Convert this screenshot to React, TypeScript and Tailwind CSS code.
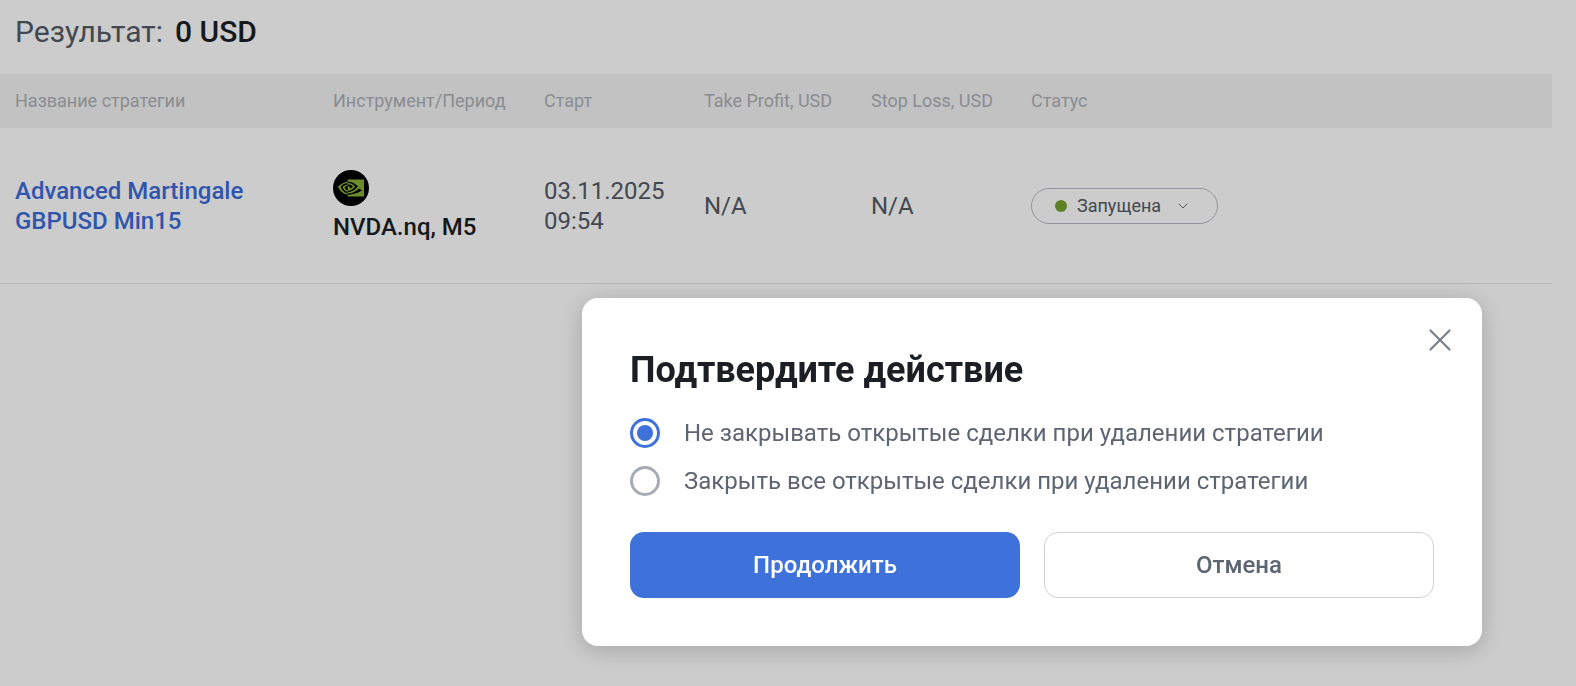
import { SiNvidia } from "react-icons/si";
import { X, ChevronDown } from "lucide-react";

const columns = [
  "Название стратегии",
  "Инструмент/Период",
  "Старт",
  "Take Profit, USD",
  "Stop Loss, USD",
  "Статус",
];

const gridCols = "grid grid-cols-[318px_211px_160px_167px_160px_1fr] pl-[15px]";

export default function App() {
  return (
    <div className="min-h-[686px] w-full bg-white font-['Roboto',sans-serif] overflow-hidden">
      <div className="w-[1552px]">
        {/* result */}
        <div className="flex items-center h-[74px] pl-[15px] pb-[10px] text-[30px] leading-[32px]">
          <span className="text-[#555b66]">Результат:</span>
          <span className="ml-[12px] font-medium text-[#1b1e23]">0 USD</span>
        </div>

        {/* table head */}
        <div className={`${gridCols} items-center h-[54px] pb-[1px] bg-[#f3f3f3] text-[18px] text-[#adb0b6]`}>
          {columns.map((c) => (
            <div key={c}>{c}</div>
          ))}
        </div>

        {/* row */}
        <div className={`${gridCols} items-center h-[156px] border-b border-[#e5e7eb]`}>
          <div className="text-[24px] leading-[30px] font-medium text-[#3b6cd8]">
            Advanced Martingale
            <br />
            GBPUSD Min15
          </div>
          <div className="flex flex-col">
            <div className="flex items-center justify-center w-[36px] h-[36px] rounded-full bg-black">
              <SiNvidia className="w-[26px] h-[26px] text-[#86b032]" />
            </div>
            <div className="mt-[7px] text-[24px] leading-[28px] font-medium text-[#1b1e23]">NVDA.nq, M5</div>
          </div>
          <div className="text-[24px] leading-[30px] text-[#555b66]">
            03.11.2025
            <br />
            09:54
          </div>
          <div className="text-[24px] text-[#555b66]">N/A</div>
          <div className="text-[24px] text-[#555b66]">N/A</div>
          <div>
            <div className="flex items-center w-[187px] h-[36px] pl-[23px] rounded-full border border-[#b8bcc4] text-[18px] text-[#555b66]">
              <span className="w-[12px] h-[12px] rounded-full bg-[#73a32f]" />
              <span className="ml-[10px]">Запущена</span>
              <ChevronDown className="ml-[14px] w-[16px] h-[16px] text-[#6b7280]" strokeWidth={1.5} />
            </div>
          </div>
        </div>
      </div>

      {/* overlay */}
      <div className="fixed inset-0 bg-black/20" />

      {/* modal */}
      <div className="fixed left-[582px] top-[298px] w-[900px] h-[348px] px-[48px] pt-[50px] rounded-[16px] bg-white shadow-[0_4px_24px_rgba(0,0,0,0.2)]">
        <button className="absolute right-[23px] top-[23px] text-[#7b808a]">
          <X className="w-[38px] h-[38px]" strokeWidth={1.4} />
        </button>
        <div className="text-[36px] leading-[44px] font-bold text-[#1b1e23]">Подтвердите действие</div>
        <div className="mt-[26px] flex flex-col gap-[18px] text-[24px] text-[#5d6472]">
          <div className="flex items-center h-[30px]">
            <span className="flex items-center justify-center w-[30px] h-[30px] rounded-full border-[3px] border-[#3f71da]">
              <span className="w-[16px] h-[16px] rounded-full bg-[#3f71da]" />
            </span>
            <span className="ml-[24px]">Не закрывать открытые сделки при удалении стратегии</span>
          </div>
          <div className="flex items-center h-[30px]">
            <span className="w-[30px] h-[30px] rounded-full border-[3px] border-[#a6abb5]" />
            <span className="ml-[24px]">Закрыть все открытые сделки при удалении стратегии</span>
          </div>
        </div>
        <div className="mt-[36px] grid grid-cols-2 gap-[24px]">
          <button className="h-[66px] rounded-[14px] bg-[#3f71da] text-[24px] font-medium text-white">Продолжить</button>
          <button className="h-[66px] rounded-[14px] border border-[#cfd1d6] bg-white text-[24px] font-medium text-[#5d6472]">
            Отмена
          </button>
        </div>
      </div>
    </div>
  );
}
